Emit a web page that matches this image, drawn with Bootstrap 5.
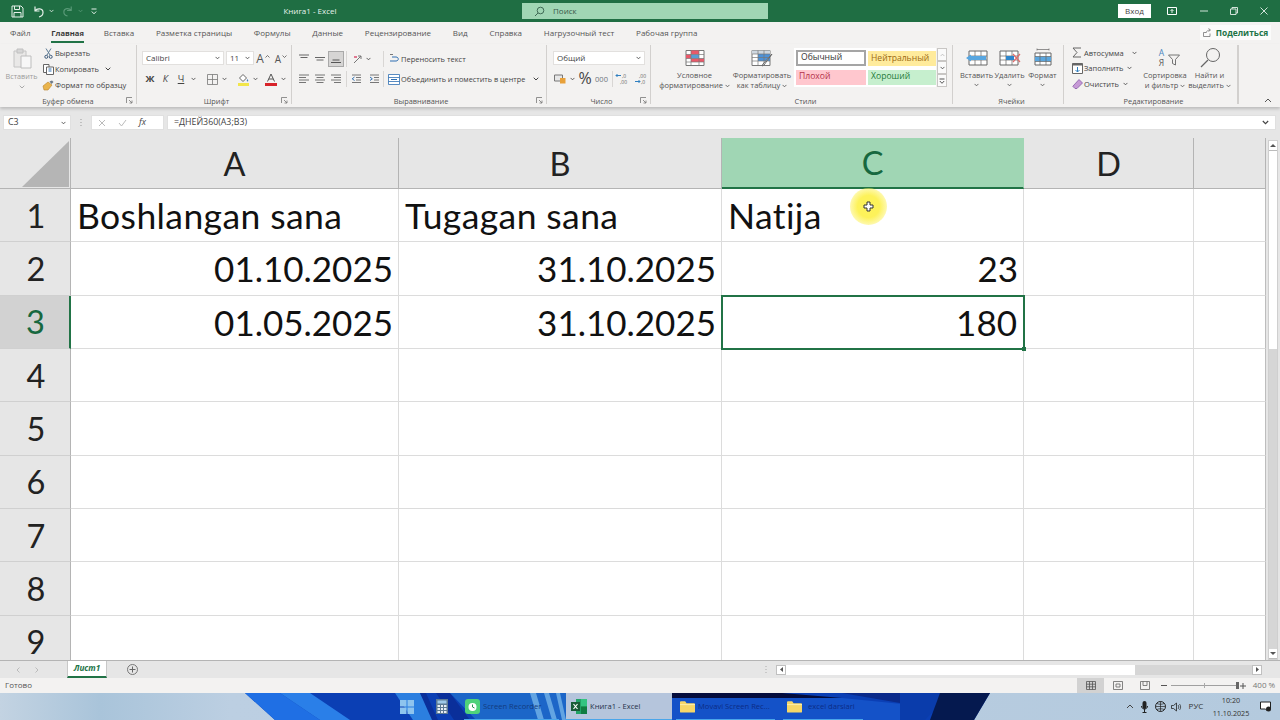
<!DOCTYPE html>
<html lang="ru">
<head>
<meta charset="utf-8">
<title>Книга1 - Excel</title>
<link href="https://cdn.jsdelivr.net/npm/bootstrap@5.3.0/dist/css/bootstrap.min.css" rel="stylesheet">
<style>
html,body{width:1280px;height:720px;overflow:hidden;margin:0;background:#e6e6e6}
body{font-family:"Open Sans","Noto Sans",sans-serif;font-size:7.5px;color:#444;line-height:1.1}
.app{width:1280px;height:720px}
.flex-none{flex:none}
svg{display:block;flex:none}
.titlebar{height:22px;background:#1f6e43;color:#e8f2ec}
.qat{width:280px;padding-left:11px;gap:0}
.doc{width:60px;text-align:center;font-size:8px}
.search{width:246px;height:16px;margin-left:182px;margin-right:auto;background:#a0d6b4;color:#38584a;padding-left:12px;gap:8px;font-size:8px}
.login{width:33px;height:14px;background:#fff;color:#444;font-size:8px;margin-right:6px}
.win{display:flex;justify-content:center;flex:none}
.win1{width:30px}.win2{width:34px}.win3{width:26px}.win4{width:33px}
.tabsrow{height:22px;background:#f3f2f1;padding-left:10px;gap:21.8px;position:relative;font-size:8px;color:#555}
.tabsrow .active{font-weight:700;font-size:7.6px;color:#3a3a3a;position:relative}
.tabsrow .active::after{content:"";position:absolute;left:0;right:0;bottom:-6px;height:2px;background:#217346}
.mn1{margin-left:-1px}.mn2{margin-left:-2px}
.share{position:absolute;left:1200px;top:3px;width:71px;height:15px;background:#fbfbfa;color:#217346;font-weight:700;font-size:8.4px;gap:4px}
.ribbon{height:63px;background:#f3f2f1;box-shadow:0 2px 3px rgba(0,0,0,.18);position:relative;z-index:2}
.rgroup{height:59px;border-right:1px solid #d2d0ce;position:relative;margin-top:1px}
.rbody{height:50px;display:flow-root}
.rlabel{font-size:7.4px;text-align:center;color:#555;height:12px;line-height:12px;position:relative}
.launch{position:absolute;right:3px;top:2px}
.g1{width:137px}.g2{width:155px;padding-left:5px}.g3{width:255px;padding-left:4px}.g4{width:104px;padding-left:6px}.g5{width:302px;padding-left:8px}.g6{width:111px;padding-left:7px}.g7{width:175px;padding-left:6px;border-right-width:2px}
.r1{height:19px;margin-top:6px}.r2{height:18px}
.ft{font-size:9.5px}
.aup{font-size:12px;color:#555}.adn{font-size:10px;color:#555}
.car{margin:0 0 5px 1px}
.slot{display:flex;align-items:center;justify-content:center;flex:none;height:16px}
.w2{width:2px}.w3{width:3px}.w4{width:4px}.w5{width:5px}.w6{width:6px}.w7{width:7px}.w8{width:8px}.w10{width:10px}.w14{width:14px}.w15{width:15px}.w16{width:16px}.w17{width:17px}.w18{width:18px}.w22{width:22px}.w24{width:24px}
.vsep{width:1px;height:16px;background:#d8d6d4;flex:none}
.sel{background:#fff;height:14px;border:1px solid #e2e0de;padding:0 3px;font-size:8px;flex:none;color:#444}
.selw82{width:82px}.selw28{width:28px;margin-left:2px}.selw92{width:92px}
.on{background:#d6d5d4;border:1px solid #a9a9a9}
.merge{font-size:7.3px}
.big{flex:none;display:flex;flex-direction:column;align-items:center;text-align:center;height:50px;padding-top:3px;color:#555}
.big svg.main{margin:0 0 2px}
.big .cap{line-height:10px;white-space:nowrap}
.b70{width:71px}.b64{width:64px}.b33{width:33px}.b46{width:46px}.b44{width:43px}
.big .chevline{display:flex;justify-content:center;height:10px;align-items:center}
.sorticon{width:30px;height:20px;margin-bottom:2px}
.az{width:18px;padding-left:5px;font-size:8.5px;line-height:10px}
.az1{color:#4a86c0}
.paste{width:43px;padding-top:3px;color:#9b9b9b;font-size:7.2px}
.cline{height:16px;gap:2px;white-space:nowrap}
.cline .slot{width:10px}
.editcol{width:72px}
.editcol .cline{height:15.5px}
.editcol .cline .slot{width:14px}
.editcol .cline{gap:0}
.gal{width:142px;height:39px;background:#fff;display:grid;grid-template-columns:70px 68px;column-gap:2px;row-gap:3px;padding:2px;margin-top:3px;font-size:8.6px;flex:none}
.gal div{display:flex;align-items:center;padding-left:3px}
.st-n{border:2px solid #a5a5a5;color:#333;height:16px}
.st-m{background:#ffeb9c;color:#9c6a12;height:15px;margin-top:1px}
.st-b{background:#ffc7ce;color:#b4324a;height:15px}
.st-g{background:#c6efce;color:#1f7a3a;height:15px}
.galbtn{width:10px;height:13px;background:#fafafa;border:1px solid #c8c6c4;margin-left:1px;display:flex;align-items:center;justify-content:center}
.galcol{margin-top:3px}
.formula{height:27px;background:#e6e6e6;padding:8px 4px 0 3px;font-size:8.8px;color:#444;position:relative}
.fbox{background:#fff;height:15px;border:1px solid #e0e0e0;flex:none;display:flex;align-items:center}
.namebox{width:68px;padding:0 4px;justify-content:space-between}
.dots{width:20px;display:flex;justify-content:center;padding-top:4px}
.fxbox{width:73px;padding:0 6px;gap:12px;margin-right:3px}
.finput{flex:1 1 auto;padding:0 6px;justify-content:space-between}
.sheetwrap{height:526px;padding-top:4px;background:#e6e6e6;min-height:0}
.gridarea{width:1266px;height:522px;overflow:hidden;flex:none}
.sheet{display:grid;grid-template-columns:71px 328px 323px 302px 170px 72px;grid-template-rows:51px repeat(9,53.33px);font-family:Lato,"Carlito",sans-serif;color:#111;background:#fff}
.h{background:#e6e6e6;display:flex;align-items:center;justify-content:center;border-right:1px solid #b4b4b4;border-bottom:1px solid #b4b4b4;font-size:32.5px;color:#222;padding-top:1px}
.rh{border-bottom-color:#d0d0d0;padding:1px 0 0 2px}
.hc{background:#a0d6b4;color:#17683f;border-bottom:2px solid #217346;border-right-color:#a0d6b4}
.rh3{background:#d2d2d2;color:#17683f;border-right:2px solid #217346}
.corner{align-items:flex-end;justify-content:flex-end;padding:0 1px 1px 0}
.c{border-right:1px solid #dcdcdc;border-bottom:1px solid #dcdcdc;display:flex;align-items:center;padding:0 5px 0 6px;font-size:35.5px;white-space:nowrap;position:relative}
.txt{letter-spacing:.4px}
.num{justify-content:flex-end;font-size:35px}
.last{border-right:1px solid #bdbdbd}
.active-cell{outline:2px solid #217346;outline-offset:-1px;z-index:1;padding-right:6px}
.handle{position:absolute;right:-3px;bottom:-3px;width:4px;height:4px;background:#217346;border:0}
.cursor{position:absolute;left:128px;top:-1px;width:37px;height:37px;border-radius:50%;background:radial-gradient(circle,#fdf25a 0,#fdf25a 42%,rgba(253,242,90,.45) 72%,rgba(255,255,255,0) 100%);display:flex;align-items:center;justify-content:center;z-index:3}
.vscroll{width:14px;padding:2px 0 0 2px;background:#e6e6e6}
.vtrack{width:10px;height:520px;background:#d6d6d6;border:1px solid #cfcfcf}
.vbtn{height:10px;background:#fff;border-bottom:1px solid #bbb;display:flex;align-items:center;justify-content:center;flex:none}
.vthumb{height:198px;background:#fff;flex:none}
.tabsbar{height:18px;background:#e6e6e6;border-top:1px solid #b4b4b4;position:relative;flex:none}
.nav{width:67px;padding-left:16px;gap:15px;height:16px}
.sheettab{width:40px;height:17px;margin-top:-1px;background:#fff;color:#217346;font-weight:700;font-style:italic;font-size:8.2px;border-bottom:2px solid #217346;border-left:1px solid #c8c8c8;border-right:1px solid #c8c8c8;display:flex;align-items:center;justify-content:center}
.plus{margin-left:20px}
.hs-dots{margin-left:627px}
.hscroll{margin-left:9px;width:486px;height:10px;background:#d6d6d6}
.hbtn{width:10px;height:10px;background:#fff;border:1px solid #c0c0c0;display:flex;align-items:center;justify-content:center;flex:none}
.hthumb{width:349px;height:10px;background:#fff;flex:none;margin-right:auto}
.statusbar{height:15px;background:#f3f2f1;flex:none;padding-left:5px;font-size:8px;color:#555}
.vwbtn{width:27px;height:15px;display:flex;align-items:center;justify-content:center;flex:none}
.vwon{background:#d2d2d2}
.zmin{margin-left:3px}
.zoomline{width:66px;height:1px;background:#a0a0a0;position:relative;margin:0 3px 0 4px}
.zoomline i{position:absolute;display:block;background:#666}
.zk{left:33px;top:-2px;width:1px;height:5px;background:#aaa!important}
.zt{right:-2px;top:-3px;width:3px;height:7px}
.pct{width:34px;text-align:center;color:#777;font-size:8px;padding-left:2px}
.taskbar{height:27px;position:relative;flex:none;background:linear-gradient(90deg,#c3d3e2 0,#a9c4da 100px,#bccfe2 230px,#b4cade 100%);overflow:hidden;color:#0b2f7a;font-size:7.6px}
.wall{position:absolute;left:0;top:0}
.tbinner{position:relative;height:27px;width:100%}
.tb{height:27px;display:flex;align-items:center;flex:none;white-space:nowrap;position:relative}
.t-start{margin-left:400px;width:14px}
.t-calc{margin-left:21px;width:25px;padding-left:1px}
.t-rec{width:103px;padding-left:5px;gap:3px;color:#123b7f}
.t-xl{margin-left:3px;width:106px;background:#b5c5dc;color:#26324a;padding-left:5px;gap:3px}
.t-mov{width:107px;padding-left:8px;gap:3px;color:#0c2c86}
.t-ex{width:88px;padding-left:8px;gap:3px;color:#0c2c86}
.t-ex span{padding-left:3px}
.tb::after{content:"";position:absolute;left:4px;right:4px;bottom:0;height:1px;background:#4aa6ea}
.t-start::after,.t-calc::after{display:none}
.t-xl::after{left:0;right:0}
.tray{margin-left:auto;color:#333;font-size:8px;padding-right:4px}
.clock{width:46px;text-align:center;line-height:12.500px;font-size:7.2px;flex:none}
</style>
</head>
<body>
<svg class="d-none" aria-hidden="true">
<symbol id="chev" viewBox="0 0 6 4"><path d="M.7.7 3 3 5.300.7" fill="none" stroke="currentColor" stroke-width="1"/></symbol>
<symbol id="launch" viewBox="0 0 7 7"><path d="M.5 6V.5H6M3 3l3 3M6 3.500V6H3.500" fill="none" stroke="#777" stroke-width=".8"/></symbol>
<symbol id="folder" viewBox="0 0 16 13"><path d="M0 2a1 1 0 0 1 1-1h4.500l1.500 2h8a1 1 0 0 1 1 1v8a1 1 0 0 1-1 1H1a1 1 0 0 1-1-1z" fill="#f6d768"/><path d="M0 4h16v1H0z" fill="#fdf0b0"/></symbol>
<symbol id="atop" viewBox="0 0 12 10"><path d="M1 1h10M2.500 3.500h7" fill="none" stroke="#666"/></symbol>
<symbol id="amid" viewBox="0 0 12 10"><path d="M1 3.500h10M2.500 6h7" fill="none" stroke="#666"/></symbol>
<symbol id="abot" viewBox="0 0 12 10"><path d="M2.500 6h7M1 8.500h10" fill="none" stroke="#555"/></symbol>
<symbol id="aleft" viewBox="0 0 12 10"><path d="M1 1h10M1 3.500h7M1 6h10M1 8.500h7" fill="none" stroke="#666" stroke-width=".9"/></symbol>
<symbol id="acen" viewBox="0 0 12 10"><path d="M1 1h10M2.500 3.500h7M1 6h10M2.500 8.500h7" fill="none" stroke="#666" stroke-width=".9"/></symbol>
<symbol id="arig" viewBox="0 0 12 10"><path d="M1 1h10M4 3.500h7M1 6h10M4 8.500h7" fill="none" stroke="#666" stroke-width=".9"/></symbol>
</svg>
<div class="app d-flex flex-column">
  <div class="titlebar d-flex align-items-center flex-none">
    <div class="qat d-flex align-items-center">
      <svg width="13" height="13" viewBox="0 0 13 13"><path d="M1 1h9l2 2v9H1zM3.500 1v3.500h5V1M3 12V7.500h7V12" fill="none" stroke="#e6f0ea" stroke-width="1"/></svg>
      <svg class="ms-2" width="13" height="13" viewBox="0 0 13 13"><path d="M3 1.500V6h4.500M3 6c2-3 8-3 8 1.500 0 2.500-2 4-4 4.500" fill="none" stroke="#e6f0ea" stroke-width="1.200"/></svg>
      <svg class="ms-1" width="5" height="4" color="#e6f0ea"><use href="#chev"/></svg>
      <svg class="ms-2" width="12" height="12" viewBox="0 0 13 13"><path d="M10 1.500V6H5.500M10 6C8 3 2 3 2 7.500c0 2.500 2 4 4 4.500" fill="none" stroke="#5a9a78" stroke-width="1.200"/></svg>
      <svg class="ms-1" width="5" height="4" color="#5a9a78"><use href="#chev"/></svg>
      <svg class="ms-2" width="6" height="7" viewBox="0 0 6 7"><path d="M.5 1h5M.8 3.500 3 5.800 5.200 3.500" fill="none" stroke="#e6f0ea" stroke-width="1"/></svg>
    </div>
    <div class="doc">Книга1 - Excel</div>
    <div class="search d-flex align-items-center">
      <svg width="11" height="11" viewBox="0 0 11 11"><circle cx="6.500" cy="4.500" r="3.300" fill="none" stroke="#3f6a55" stroke-width="1"/><path d="M4 7 1 10" stroke="#3f6a55" stroke-width="1"/></svg>
      <span>Поиск</span>
    </div>
    <div class="login d-flex align-items-center justify-content-center">Вход</div>
    <div class="win win1"><svg width="10" height="8" viewBox="0 0 10 8"><path d="M.5.500h9v7h-9z" fill="none" stroke="#fff"/><path d="M5 6V2.500M3.500 4 5 2.500 6.500 4" fill="none" stroke="#fff" stroke-width=".9"/></svg></div>
    <div class="win win2"><svg width="8" height="2" viewBox="0 0 8 2"><path d="M0 1h8" stroke="#cfe3d8"/></svg></div>
    <div class="win win3"><svg width="8" height="8" viewBox="0 0 8 8"><path d="M.5 2h5.500v5.500H.5zM2 2V.5h5.500V6H6" fill="none" stroke="#e6f0ea" stroke-width=".9"/></svg></div>
    <div class="win win4"><svg width="8" height="8" viewBox="0 0 8 8"><path d="M.5.500l7 7M7.500.500l-7 7" stroke="#e6f0ea" stroke-width=".9"/></svg></div>
  </div>
  <div class="tabsrow d-flex align-items-center flex-none">
    <span>Файл</span><span class="active mn1">Главная</span><span class="mn2">Вставка</span><span>Разметка страницы</span><span>Формулы</span><span>Данные</span><span>Рецензирование</span><span>Вид</span><span>Справка</span><span>Нагрузочный тест</span><span>Рабочая группа</span>
    <div class="share d-flex align-items-center justify-content-center">
      <svg width="9" height="9" viewBox="0 0 9 9"><path d="M.5 4.500h2.500M.5 4.500v4h6.500v-3M3 5c.5-2 2-3 4-3M5.500.5 7.500 2 5.500 3.500" fill="none" stroke="#777" stroke-width=".8"/></svg><span>Поделиться</span>
    </div>
  </div>
  <div class="ribbon d-flex flex-none">
    <div class="rgroup g1">
      <div class="rbody d-flex">
        <div class="paste d-flex flex-column align-items-center">
          <svg width="20" height="21" viewBox="0 0 20 21"><path d="M2 3h12v16H2z" fill="#e9e8e7" stroke="#c4c4c4"/><path d="M5 1h6v4H5z" fill="#d6d6d6" stroke="#c0c0c0"/><path d="M9 8h10v12H9z" fill="#f7f7f7" stroke="#bdbdbd"/></svg>
          <div class="mt-1">Вставить</div>
          <svg class="mt-1" width="6" height="4" color="#aaa"><use href="#chev"/></svg>
        </div>
        <div class="d-flex flex-column">
          <div class="cline d-flex align-items-center"><span class="slot"><svg width="9" height="11" viewBox="0 0 9 11"><path d="M2 .5 6 7M7 .5 3 7" stroke="#5f7c95" stroke-width="1"/><circle cx="2.300" cy="8.800" r="1.500" fill="none" stroke="#3c5a7a"/><circle cx="6.700" cy="8.800" r="1.500" fill="none" stroke="#3c5a7a"/></svg></span>Вырезать</div>
          <div class="cline d-flex align-items-center"><span class="slot"><svg width="11" height="11" viewBox="0 0 11 11"><path d="M.5.5h5.500v8H.5z" fill="#fff" stroke="#666"/><path d="M3.500 3h7v7.500h-7z" fill="#fff" stroke="#666"/><path d="M5.500 5h3M5.500 7h3" stroke="#2f6fb2"/></svg></span>Копировать <svg class="ms-1" width="6" height="4"><use href="#chev"/></svg></div>
          <div class="cline d-flex align-items-center"><span class="slot"><svg width="12" height="11" viewBox="0 0 12 11"><path d="M1 6 6 2l4 3-4 5H2z" fill="#e9b44c" stroke="#b9822a" stroke-width=".6"/><path d="M7.500 1.500 10 .5 11.500 2 9.500 4z" fill="#6c7a88"/></svg></span>Формат по образцу</div>
        </div>
      </div>
      <div class="rlabel">Буфер обмена<svg class="launch" width="7" height="7"><use href="#launch"/></svg></div>
    </div>
    <div class="rgroup g2">
      <div class="rbody">
        <div class="r1 d-flex align-items-start">
          <div class="sel selw82 d-flex align-items-center justify-content-between"><span>Calibri</span><svg width="5" height="4"><use href="#chev"/></svg></div>
          <div class="sel selw28 d-flex align-items-center justify-content-between"><span>11</span><svg width="5" height="4"><use href="#chev"/></svg></div>
          <span class="slot w18 aup">A<svg class="car" width="5" height="3" viewBox="0 0 5 3"><path d="M.5 2.500 2.500.5l2 2" fill="none" stroke="#555" stroke-width=".8"/></svg></span>
          <span class="slot w18 adn">A<svg class="car" width="5" height="3" viewBox="0 0 5 3"><path d="M.5.5l2 2 2-2" fill="none" stroke="#555" stroke-width=".8"/></svg></span>
        </div>
        <div class="r2 d-flex align-items-center">
          <span class="slot w16 fw-bold ft">Ж</span><span class="slot w15 fst-italic ft">К</span><span class="slot w16 text-decoration-underline ft">Ч</span><span class="slot w8"><svg width="5" height="4"><use href="#chev"/></svg></span>
          <span class="w8"></span>
          <span class="slot w14"><svg width="11" height="11" viewBox="0 0 11 11"><path d="M.5.5h10v10H.5zM5.500.5v10M.5 5.500h10" fill="none" stroke="#777" stroke-width=".8"/></svg></span><span class="slot w10"><svg width="5" height="4"><use href="#chev"/></svg></span>
          <span class="w7"></span>
          <span class="slot w14"><svg width="13" height="13" viewBox="0 0 13 13"><path d="M2.500 5 6 1.500 9.500 5 6 8.500z" fill="#fff" stroke="#666"/><path d="M10.500 6c1 1.500 1 2.500 0 2.500s-1-1 0-2.500z" fill="#3f7fc0"/><path d="M1 10h11v3H1z" fill="#f2e64a"/></svg></span><span class="slot w10"><svg width="5" height="4"><use href="#chev"/></svg></span>
          <span class="w4"></span>
          <span class="slot w14"><svg width="12" height="13" viewBox="0 0 12 13"><path d="M2.500 8.500 6 1l3.500 7.500M3.800 6h4.400" fill="none" stroke="#555"/><path d="M0 10h12v3H0z" fill="#d8232a"/></svg></span><span class="slot w10"><svg width="5" height="4"><use href="#chev"/></svg></span>
        </div>
      </div>
      <div class="rlabel">Шрифт<svg class="launch" width="7" height="7"><use href="#launch"/></svg></div>
    </div>
    <div class="rgroup g3">
      <div class="rbody d-flex">
        <div class="d-flex flex-column">
          <div class="r1 d-flex align-items-start">
            <span class="slot w16"><svg width="12" height="10"><use href="#atop"/></svg></span><span class="slot w16"><svg width="12" height="10"><use href="#amid"/></svg></span><span class="slot w16 on"><svg width="12" height="10"><use href="#abot"/></svg></span>
            <span class="w2"></span><span class="vsep"></span><span class="w4"></span>
            <span class="slot w14"><svg width="11" height="11" viewBox="0 0 11 11"><path d="M1 9 8 2M5 2h3v3" fill="none" stroke="#777"/><path d="M1 3h3" stroke="#c03"/></svg></span><span class="slot w6"><svg width="5" height="4"><use href="#chev"/></svg></span>
            <span class="w10"></span><span class="w2"></span><span class="vsep"></span><span class="w3"></span>
          </div>
          <div class="r2 d-flex align-items-center">
            <span class="slot w16"><svg width="12" height="10"><use href="#aleft"/></svg></span><span class="slot w16"><svg width="12" height="10"><use href="#acen"/></svg></span><span class="slot w16"><svg width="12" height="10"><use href="#arig"/></svg></span>
            <span class="w2"></span><span class="vsep"></span><span class="w2"></span>
            <span class="slot w14"><svg width="11" height="10" viewBox="0 0 11 10"><path d="M1 1h9M5 3.500h5M5 6h5M1 8.500h9" stroke="#777"/><path d="M3.500 3 1.200 4.800 3.500 6.500" fill="none" stroke="#2f6fb2"/></svg></span>
            <span class="w4"></span>
            <span class="slot w14"><svg width="11" height="10" viewBox="0 0 11 10"><path d="M1 1h9M5 3.500h5M5 6h5M1 8.500h9" stroke="#777"/><path d="M1 3l2.300 1.800L1 6.500" fill="none" stroke="#2f6fb2"/></svg></span>
            <span class="w2"></span><span class="vsep"></span><span class="w3"></span>
          </div>
        </div>
        <div class="d-flex flex-column">
          <div class="r1 d-flex align-items-start"><span class="slot w14"><svg width="12" height="12" viewBox="0 0 12 12"><path d="M2 8h6c3 0 3-4 0-4H4" fill="none" stroke="#2f6fb2"/><path d="M2 1.500h3" stroke="#777"/></svg></span><span class="slot">Переносить текст</span></div>
          <div class="r2 d-flex align-items-center merge"><span class="slot w14"><svg width="12" height="11" viewBox="0 0 12 11"><path d="M.5.500h11v10H.5zM.5 3.500h11M.5 7.500h11" fill="#fff" stroke="#2f6fb2" stroke-width=".8"/><path d="M3 5.500h6" stroke="#2f6fb2"/></svg></span><span class="slot">Объединить и поместить в центре</span><svg class="ms-2" width="6" height="4"><use href="#chev"/></svg></div>
        </div>
      </div>
      <div class="rlabel">Выравнивание<svg class="launch" width="7" height="7"><use href="#launch"/></svg></div>
    </div>
    <div class="rgroup g4">
      <div class="rbody">
        <div class="r1 d-flex align-items-start"><div class="sel selw92 d-flex align-items-center justify-content-between"><span>Общий</span><svg width="5" height="4"><use href="#chev"/></svg></div></div>
        <div class="r2 d-flex align-items-center">
          <span class="slot w14"><svg width="12" height="10" viewBox="0 0 12 10"><path d="M.5 1h8v6h-8z" fill="#e7e7e7" stroke="#777"/><path d="M6 4h5.500v5.500H6z" fill="#e8a13a"/></svg></span><span class="slot w10"><svg width="5" height="4"><use href="#chev"/></svg></span>
          <span class="slot w16 fs-6">%</span><span class="slot w17 text-secondary">000</span>
          <span class="w2"></span><span class="vsep"></span><span class="w2"></span>
          <span class="slot w14"><svg width="14" height="12" viewBox="0 0 14 12"><path d="M6 2.500H1M2.500 1 1 2.500 2.500 4" fill="none" stroke="#2f7fc0"/><text x="7" y="5" font-size="5" font-family="Open Sans" fill="#666">,0</text><text x="5" y="11" font-size="5" font-family="Open Sans" fill="#666">,00</text></svg></span>
          <span class="w5"></span>
          <span class="slot w14"><svg width="14" height="12" viewBox="0 0 14 12"><text x="5" y="5" font-size="5" font-family="Open Sans" fill="#666">,00</text><path d="M1 8.500h5M4.500 7 6 8.500 4.500 10" fill="none" stroke="#2f7fc0"/><text x="7" y="11" font-size="5" font-family="Open Sans" fill="#666">,0</text></svg></span>
        </div>
      </div>
      <div class="rlabel">Число<svg class="launch" width="7" height="7"><use href="#launch"/></svg></div>
    </div>
    <div class="rgroup g5">
      <div class="rbody d-flex">
        <div class="big b70">
          <svg class="main" width="20" height="20" viewBox="0 0 20 20"><path d="M1 2.500h18v15H1z" fill="#fff" stroke="#777"/><path d="M6 2.500h8v4H6z" fill="#e9596a"/><path d="M1 6.500h5v4H1z" fill="#e9596a"/><path d="M6 6.500h8v4H6z" fill="#5b9bd5"/><path d="M6 10.500h13v3.500H6z" fill="#e9596a"/><path d="M1 6.500h18M1 10.500h18M1 14h18M6 2.500v15M14 2.500v15" stroke="#777" stroke-width=".7"/></svg>
          <div class="cap">Условное</div><div class="cap">форматирование <svg class="d-inline" width="5" height="4"><use href="#chev"/></svg></div>
        </div>
        <div class="big b64">
          <svg class="main" width="22" height="20" viewBox="0 0 22 20"><path d="M1 2.500h18v15H1z" fill="#fff" stroke="#777"/><path d="M1 2.500h18v3.500H1z" fill="#cfd8e0"/><path d="M7 6h12v7H7z" fill="#4d92d8"/><path d="M1 6h18M1 9.500h18M1 13h18M7 2.500v15M13 2.500v15" stroke="#777" stroke-width=".7"/><path d="M21 6 13 17l-2 1 1-2z" fill="#fff" stroke="#666"/></svg>
          <div class="cap">Форматировать</div><div class="cap">как таблицу <svg class="d-inline" width="5" height="4"><use href="#chev"/></svg></div>
        </div>
        <div class="gal">
          <div class="st-n">Обычный</div><div class="st-m">Нейтральный</div>
          <div class="st-b">Плохой</div><div class="st-g">Хороший</div>
        </div>
        <div class="galcol d-flex flex-column">
          <div class="galbtn"><svg width="5" height="4" viewBox="0 0 6 4"><path d="M.7 3.300 3 1l2.300 2.300" fill="none" stroke="#bbb"/></svg></div>
          <div class="galbtn"><svg width="5" height="4"><use href="#chev"/></svg></div>
          <div class="galbtn"><svg width="6" height="6" viewBox="0 0 6 6"><path d="M.5 1h5M.8 3 3 5.300 5.200 3" fill="none" stroke="#555"/></svg></div>
        </div>
      </div>
      <div class="rlabel">Стили</div>
    </div>
    <div class="rgroup g6">
      <div class="rbody d-flex">
        <div class="big b33">
          <svg class="main" width="22" height="20" viewBox="0 0 22 20"><path d="M3 3h18v14H3z" fill="#fff" stroke="#666"/><path d="M3 8h18M3 12h18M9 3v14M15 3v14" stroke="#666" stroke-width=".7"/><path d="M0 10 5 6.500V8h15v4H5v1.500z" fill="#58a6e0"/></svg>
          <div class="cap">Вставить</div><div class="chevline"><svg width="5" height="4"><use href="#chev"/></svg></div>
        </div>
        <div class="big b33">
          <svg class="main" width="22" height="20" viewBox="0 0 22 20"><path d="M1 3h18v14H1z" fill="#fff" stroke="#666"/><path d="M1 8h18M1 12h18M7 3v14M13 3v14" stroke="#666" stroke-width=".7"/><path d="M7 8h8v4H7z" fill="#2f86cc"/><path d="m14 6 7 8M21 6l-7 8" stroke="#e06c6c" stroke-width="1.200"/></svg>
          <div class="cap">Удалить</div><div class="chevline"><svg width="5" height="4"><use href="#chev"/></svg></div>
        </div>
        <div class="big b33">
          <svg class="main" width="20" height="20" viewBox="0 0 20 20"><path d="M2 5h16v12H2z" fill="#fff" stroke="#666"/><path d="M2 8.500h16v5H2z" fill="#5ba6de"/><path d="M2 8.500h16M2 13.500h16M7 5v12M13 5v12" stroke="#666" stroke-width=".7"/><path d="M4 1.500h12M4 .5v2M16 .5v2" stroke="#666" stroke-width=".7"/></svg>
          <div class="cap">Формат</div><div class="chevline"><svg width="5" height="4"><use href="#chev"/></svg></div>
        </div>
      </div>
      <div class="rlabel">Ячейки</div>
    </div>
    <div class="rgroup g7">
      <div class="rbody d-flex">
        <div class="d-flex flex-column flex-none editcol">
          <div class="cline d-flex align-items-center"><span class="slot"><svg width="10" height="11" viewBox="0 0 10 11"><path d="M9 1H1l4 4.500L1 10h8" fill="none" stroke="#666"/></svg></span>Автосумма<svg class="ms-2" width="5" height="4"><use href="#chev"/></svg></div>
          <div class="cline d-flex align-items-center"><span class="slot"><svg width="11" height="11" viewBox="0 0 11 11"><path d="M.5.500h10v10H.5z" fill="#fff" stroke="#666"/><path d="M.5.500h10v2H.5z" fill="#666"/><path d="M5.500 4v5M3.500 7l2 2 2-2" fill="none" stroke="#2f7fc0"/></svg></span>Заполнить <svg class="ms-1" width="5" height="4"><use href="#chev"/></svg></div>
          <div class="cline d-flex align-items-center"><span class="slot"><svg width="11" height="10" viewBox="0 0 11 10"><path d="M7 .5 10.500 4 5 9.500H3L.8 7.300z" fill="#c69ad6" stroke="#7d4fa0" stroke-width=".7"/></svg></span>Очистить <svg class="ms-1" width="5" height="4"><use href="#chev"/></svg></div>
        </div>
        <div class="big b46">
          <div class="sorticon d-flex"><div class="az"><div class="az1">А</div><div>Я</div></div><svg width="12" height="20" viewBox="0 0 12 20"><path d="M.5 7h11l-4 4.500V17l-3-1.500v-4z" fill="none" stroke="#666" stroke-width=".9"/></svg></div>
          <div class="cap">Сортировка</div><div class="cap">и фильтр <svg class="d-inline" width="5" height="4"><use href="#chev"/></svg></div>
        </div>
        <div class="big b44">
          <svg class="main" width="22" height="20" viewBox="0 0 22 20"><circle cx="14" cy="7" r="6.500" fill="none" stroke="#666"/><path d="M9 12 2 19" stroke="#666" stroke-width="1.200"/></svg>
          <div class="cap">Найти и</div><div class="cap">выделить <svg class="d-inline" width="5" height="4"><use href="#chev"/></svg></div>
        </div>
      </div>
      <div class="rlabel">Редактирование</div>
    </div>
    <div class="flex-fill d-flex justify-content-end align-items-end pe-2 pb-1"><svg width="8" height="5" viewBox="0 0 8 5"><path d="M1 4 4 1l3 3" fill="none" stroke="#555"/></svg></div>
  </div>
  <div class="formula d-flex flex-none">
    <div class="fbox namebox"><span>C3</span><svg width="5" height="4"><use href="#chev"/></svg></div>
    <div class="dots"><svg width="2" height="7" viewBox="0 0 2 7"><path d="M1 0v1M1 3v1M1 6v1" stroke="#999"/></svg></div>
    <div class="fbox fxbox"><svg width="8" height="8" viewBox="0 0 8 8"><path d="M1 1l6 6M7 1 1 7" stroke="#bbb"/></svg><svg width="9" height="8" viewBox="0 0 9 8"><path d="M1 4l2.500 3L8 1" fill="none" stroke="#bbb"/></svg><span class="fst-italic">fx</span></div>
    <div class="fbox finput"><span>=ДНЕЙ360(A3;B3)</span><svg width="7" height="5"><use href="#chev"/></svg></div>
  </div>
  <div class="sheetwrap d-flex flex-none">
    <div class="gridarea">
      <div class="sheet">
        <div class="h corner"><svg width="47" height="46" viewBox="0 0 47 46"><path d="M47 0v46H0z" fill="#b5b5b5"/></svg></div>
        <div class="h">A</div><div class="h">B</div><div class="h hc">C</div><div class="h">D</div><div class="h"></div>

        <div class="h rh">1</div><div class="c txt">Boshlangan sana</div><div class="c txt">Tugagan sana</div>
        <div class="c txt">Natija<div class="cursor"><svg width="11" height="11" viewBox="0 0 11 11"><path d="M4 1h3v3h3v3H7v3H4V7H1V4h3z" fill="#fff" stroke="#333" stroke-width="1"/></svg></div></div>
        <div class="c"></div><div class="c last"></div>

        <div class="h rh">2</div><div class="c num">01.10.2025</div><div class="c num">31.10.2025</div><div class="c num">23</div><div class="c"></div><div class="c last"></div>

        <div class="h rh rh3">3</div><div class="c num">01.05.2025</div><div class="c num">31.10.2025</div><div class="c num active-cell">180<span class="handle"></span></div><div class="c"></div><div class="c last"></div>

        <div class="h rh">4</div><div class="c"></div><div class="c"></div><div class="c"></div><div class="c"></div><div class="c last"></div>
        <div class="h rh">5</div><div class="c"></div><div class="c"></div><div class="c"></div><div class="c"></div><div class="c last"></div>
        <div class="h rh">6</div><div class="c"></div><div class="c"></div><div class="c"></div><div class="c"></div><div class="c last"></div>
        <div class="h rh">7</div><div class="c"></div><div class="c"></div><div class="c"></div><div class="c"></div><div class="c last"></div>
        <div class="h rh">8</div><div class="c"></div><div class="c"></div><div class="c"></div><div class="c"></div><div class="c last"></div>
        <div class="h rh">9</div><div class="c"></div><div class="c"></div><div class="c"></div><div class="c"></div><div class="c last"></div>
      </div>
    </div>
    <div class="vscroll">
      <div class="vtrack d-flex flex-column">
        <div class="vbtn"><svg width="6" height="3" viewBox="0 0 6 3"><path d="M3 0 6 3H0z" fill="#555"/></svg></div>
        <div class="vthumb"></div>
        <div class="flex-fill"></div>
        <div class="vbtn"><svg width="6" height="3" viewBox="0 0 6 3"><path d="M0 0h6L3 3z" fill="#555"/></svg></div>
      </div>
    </div>
  </div>
  <div class="tabsbar d-flex align-items-center">
    <div class="nav d-flex align-items-center">
      <svg width="4" height="6" viewBox="0 0 4 6"><path d="M3.500.5 1 3l2.500 2.500" fill="none" stroke="#bbb"/></svg>
      <svg width="4" height="6" viewBox="0 0 4 6"><path d="M.5.5 3 3 .5 5.500" fill="none" stroke="#bbb"/></svg>
    </div>
    <div class="sheettab">Лист1</div>
    <svg class="plus" width="11" height="11" viewBox="0 0 11 11"><circle cx="5.500" cy="5.500" r="5" fill="none" stroke="#777"/><path d="M5.500 2.500v6M2.500 5.500h6" stroke="#666"/></svg>
    <svg class="hs-dots" width="2" height="7" viewBox="0 0 2 7"><path d="M1 0v1M1 3v1M1 6v1" stroke="#aaa"/></svg>
    <div class="hscroll d-flex">
      <div class="hbtn"><svg width="3" height="5" viewBox="0 0 3 5"><path d="M3 0v5L0 2.500z" fill="#555"/></svg></div>
      <div class="hthumb"></div>
      <div class="hbtn"><svg width="3" height="5" viewBox="0 0 3 5"><path d="M0 0v5l3-2.500z" fill="#555"/></svg></div>
    </div>
  </div>
  <div class="statusbar d-flex align-items-center">
    <span>Готово</span>
    <div class="ms-auto d-flex align-items-center">
      <div class="vwbtn vwon"><svg width="10" height="9" viewBox="0 0 10 9"><path d="M.5.500h9v8h-9zM3.500.500v8M6.500.500v8M.5 3.200h9M.5 5.800h9" fill="none" stroke="#555" stroke-width=".8"/></svg></div>
      <div class="vwbtn"><svg width="10" height="9" viewBox="0 0 10 9"><path d="M.5.500h9v8h-9zM3 3h4v3H3z" fill="none" stroke="#666" stroke-width=".8"/></svg></div>
      <div class="vwbtn"><svg width="10" height="9" viewBox="0 0 10 9"><path d="M.5.500h9v8h-9zM3 .5v4h4v-4" fill="none" stroke="#666" stroke-width=".8"/></svg></div>
      <svg class="zmin" width="6" height="1"><path d="M0 .5h6" stroke="#555"/></svg>
      <div class="zoomline"><i class="zk"></i><i class="zt"></i></div>
      <svg width="6" height="6" viewBox="0 0 6 6"><path d="M0 3h6M3 0v6" stroke="#555"/></svg>
      <div class="pct">400 %</div>
    </div>
  </div>
  <div class="taskbar">
    <svg class="wall" width="1280" height="27" viewBox="0 0 1280 27">
      <path d="M245 0h745l-16 27H275z" fill="#0b3fb4"/>
      <path d="M245 0h35l40 27h-45z" fill="#1f6fe4"/>
      <path d="M280 0h30l40 27h-30z" fill="#2a7fe8"/>
      <path d="M395 0h25l15 27h-22z" fill="#2b7fe0"/>
      <path d="M420 0h6l12 27h-6zM436 0h14l20 27h-16z" fill="#0a2f9a"/>
      <path d="M450 0h116v27H476z" fill="#1c66c8"/>
      <path d="M530 0h6l8 27h-6zM544 0h5l8 27h-5zM556 0h4l6 27h-4z" fill="#62a4e2"/>
      <path d="M672 0h110l60 5H672z" fill="#040c3c"/>
      <path d="M672 5h170l60 6v16H672z" fill="#1452c8"/>
      <path d="M842 0h58v10z" fill="#0a2a8a"/>
      <path d="M900 0h50l-25 27h-25z" fill="#0a3cab"/>
      <path d="M940 0h50l-16 27h-44z" fill="#05194f"/>
    </svg>
    <div class="tbinner d-flex align-items-center">
      <div class="tb t-start"><svg width="14" height="14" viewBox="0 0 14 14"><path d="M0 0h6.500v6.500H0zM7.500 0H14v6.500H7.500zM0 7.500h6.500V14H0zM7.500 7.500H14V14H7.500z" fill="#8ec4ee"/></svg></div>
      <div class="tb t-calc"><svg width="12" height="15" viewBox="0 0 12 15"><path d="M0 0h12v15H0z" fill="#5d7a94"/><path d="M1.500 1.500h9v3h-9z" fill="#9dc8e8"/><path d="M1.500 6h2.500v2H1.500zM5 6h2v2H5zM8 6h2.500v2H8zM1.500 9h2.500v2H1.500zM5 9h2v2H5zM8 9h2.500v2H8zM1.500 12h2.500v2H1.500zM5 12h2v2H5zM8 12h2.500v2H8z" fill="#e7eef4"/></svg></div>
      <div class="tb t-rec"><svg width="15" height="15" viewBox="0 0 15 15"><rect width="15" height="15" rx="3" fill="#4fd27a"/><circle cx="7.500" cy="8" r="4" fill="#fff"/><path d="M7.500 5.500V8l2 1" stroke="#2d8f50" fill="none"/></svg><span>Screen Recorder</span></div>
      <div class="tb t-xl"><svg width="16" height="15" viewBox="0 0 16 15"><path d="M5 0h11v15H5z" fill="#21a366"/><path d="M10 0h6v7.500h-6z" fill="#33c481"/><path d="M10 7.500h6V15h-6z" fill="#107c41"/><path d="M0 3h9v9H0z" fill="#185c37"/><path d="m2.500 5 4 5m0-5-4 5" stroke="#fff" stroke-width="1.200"/></svg><span>Книга1 - Excel</span></div>
      <div class="tb t-mov"><svg width="15" height="13"><use href="#folder"/></svg><span>Movavi Screen Rec...</span></div>
      <div class="tb t-ex"><svg width="15" height="13"><use href="#folder"/></svg><span>excel darslari</span></div>
      <div class="tray d-flex align-items-center">
        <span class="slot w14"><svg width="8" height="5" viewBox="0 0 8 5"><path d="M1 4 4 1l3 3" fill="none" stroke="#444"/></svg></span>
        <span class="slot w15"><svg width="7" height="12" viewBox="0 0 7 12"><rect x="1.500" width="4" height="8" rx="2" fill="#222"/><path d="M.5 5c0 4 6 4 6 0M3.500 8v3.500M1.500 11.500h4" fill="none" stroke="#222"/></svg></span>
        <span class="slot w16"><svg width="11" height="11" viewBox="0 0 11 11"><circle cx="5.500" cy="5.500" r="5" fill="none" stroke="#222"/><path d="M.5 5.500h10M5.500.5v10M2 2.500c2 1 5 1 7 0M2 8.500c2-1 5-1 7 0" fill="none" stroke="#222" stroke-width=".7"/></svg></span>
        <span class="slot w16"><svg width="11" height="10" viewBox="0 0 11 10"><path d="M.5 3.500h2L5.500 1v8L2.500 6.500h-2z" fill="none" stroke="#222" stroke-width=".8"/><path d="M7 3c1 1 1 3 0 4M8.500 2c1.500 1.500 1.500 4.500 0 6" fill="none" stroke="#222" stroke-width=".7"/></svg></span>
        <span class="slot w24">РУС</span>
        <div class="clock"><div>10:20</div><div>11.10.2025</div></div>
        <span class="slot w22"><svg width="11" height="11" viewBox="0 0 11 11"><path d="M.5 1h10v7H8l-.5 2-2-2H.5z" fill="#fff" stroke="#222"/><circle cx="8.500" cy="8" r="2.500" fill="#222"/></svg></span>
      </div>
    </div>
  </div>
</div>
</body>
</html>
